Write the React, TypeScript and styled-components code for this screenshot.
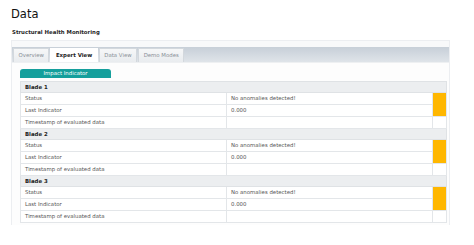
import React from "react";
import styled, { createGlobalStyle } from "styled-components";

const GlobalStyle = createGlobalStyle`
  html, body {
    margin: 0;
    padding: 0;
    background: #ffffff;
  }
  body {
    font-family: "DejaVu Sans", Verdana, sans-serif;
    color: #333;
  }
`;

const Page = styled.div`
  padding: 7px 0 0 11px;
  width: 439px;
`;

const Title = styled.h1`
  margin: 0;
  font-size: 11.5px;
  line-height: 14px;
  font-weight: normal;
  color: #111;
`;

const SubTitle = styled.h2`
  margin: 7.6px 0 0 1px;
  font-size: 5.4px;
  line-height: 7px;
  font-weight: bold;
  color: #2a2a2a;
`;

const Panel = styled.div`
  margin-top: 4.4px;
  border: 1px solid #eceef1;
  border-bottom: none;
  background: #fdfdfd;
  height: 185px;
  box-sizing: border-box;
`;

const TopStrip = styled.div`
  height: 6px;
  background: #f8f9fa;
`;

const TabBar = styled.div`
  display: flex;
  gap: 1px;
  height: 15px;
  padding: 0 0 0 1px;
  background: linear-gradient(#c7cfd8, #dfe4e9);
  border-bottom: 1px solid #eef0f2;
`;

const Tab = styled.div<{ $active?: boolean }>`
  display: flex;
  align-items: center;
  margin-top: 1px;
  padding: 0 4.5px;
  font-size: 5.4px;
  font-weight: ${(p) => (p.$active ? "bold" : "normal")};
  color: ${(p) => (p.$active ? "#222" : "#8a9097")};
  background: ${(p) =>
    p.$active ? "#ffffff" : "linear-gradient(#f6f7f8, #e9ecef)"};
  border: 1px solid ${(p) => (p.$active ? "#ffffff" : "#d3d8dd")};
  border-bottom: none;
`;

const Content = styled.div`
  padding: 6px 4px 0 8px;
`;

const IndicatorButton = styled.div`
  width: 91px;
  height: 9px;
  background: #159f9c;
  color: #ffffff;
  font-size: 5.4px;
  line-height: 9px;
  text-align: center;
  border-radius: 3px 3px 0 0;
`;

const Table = styled.table`
  margin-top: 3px;
  width: 426px;
  border-collapse: collapse;
  table-layout: fixed;
  font-size: 5.4px;
`;

const HeadCell = styled.td`
  height: 10px;
  padding: 0 4px;
  background: #eceef0;
  border: 1px solid #dfe2e5;
  font-weight: bold;
  color: #222;
`;

const Cell = styled.td<{ $flag?: boolean }>`
  height: 11px;
  padding: 0 4px;
  background: ${(p) => (p.$flag ? "#ffb700" : "#ffffff")};
  border: 1px solid #e3e6e9;
  color: #555;
  white-space: nowrap;
`;

const blades = [
  { name: "Blade 1", status: "No anomalies detected!", last: "0.000" },
  { name: "Blade 2", status: "No anomalies detected!", last: "0.000" },
  { name: "Blade 3", status: "No anomalies detected!", last: "0.000" },
];

const tabs = ["Overview", "Expert View", "Data View", "Demo Modes"];

export default function App() {
  return (
    <>
      <GlobalStyle />
      <Page>
        <Title>Data</Title>
        <SubTitle>Structural Health Monitoring</SubTitle>
        <Panel>
          <TopStrip />
          <TabBar>
            {tabs.map((t) => (
              <Tab key={t} $active={t === "Expert View"}>
                {t}
              </Tab>
            ))}
          </TabBar>
          <Content>
            <IndicatorButton>Impact Indicator</IndicatorButton>
            <Table>
              <colgroup>
                <col style={{ width: 206 }} />
                <col style={{ width: 206 }} />
                <col style={{ width: 14 }} />
              </colgroup>
              <tbody>
                {blades.map((b) => (
                  <React.Fragment key={b.name}>
                    <tr>
                      <HeadCell colSpan={3}>{b.name}</HeadCell>
                    </tr>
                    <tr>
                      <Cell>Status</Cell>
                      <Cell>{b.status}</Cell>
                      <Cell $flag rowSpan={2} />
                    </tr>
                    <tr>
                      <Cell>Last Indicator</Cell>
                      <Cell>{b.last}</Cell>
                    </tr>
                    <tr>
                      <Cell>Timestamp of evaluated data</Cell>
                      <Cell />
                      <Cell />
                    </tr>
                  </React.Fragment>
                ))}
              </tbody>
            </Table>
          </Content>
        </Panel>
      </Page>
    </>
  );
}
